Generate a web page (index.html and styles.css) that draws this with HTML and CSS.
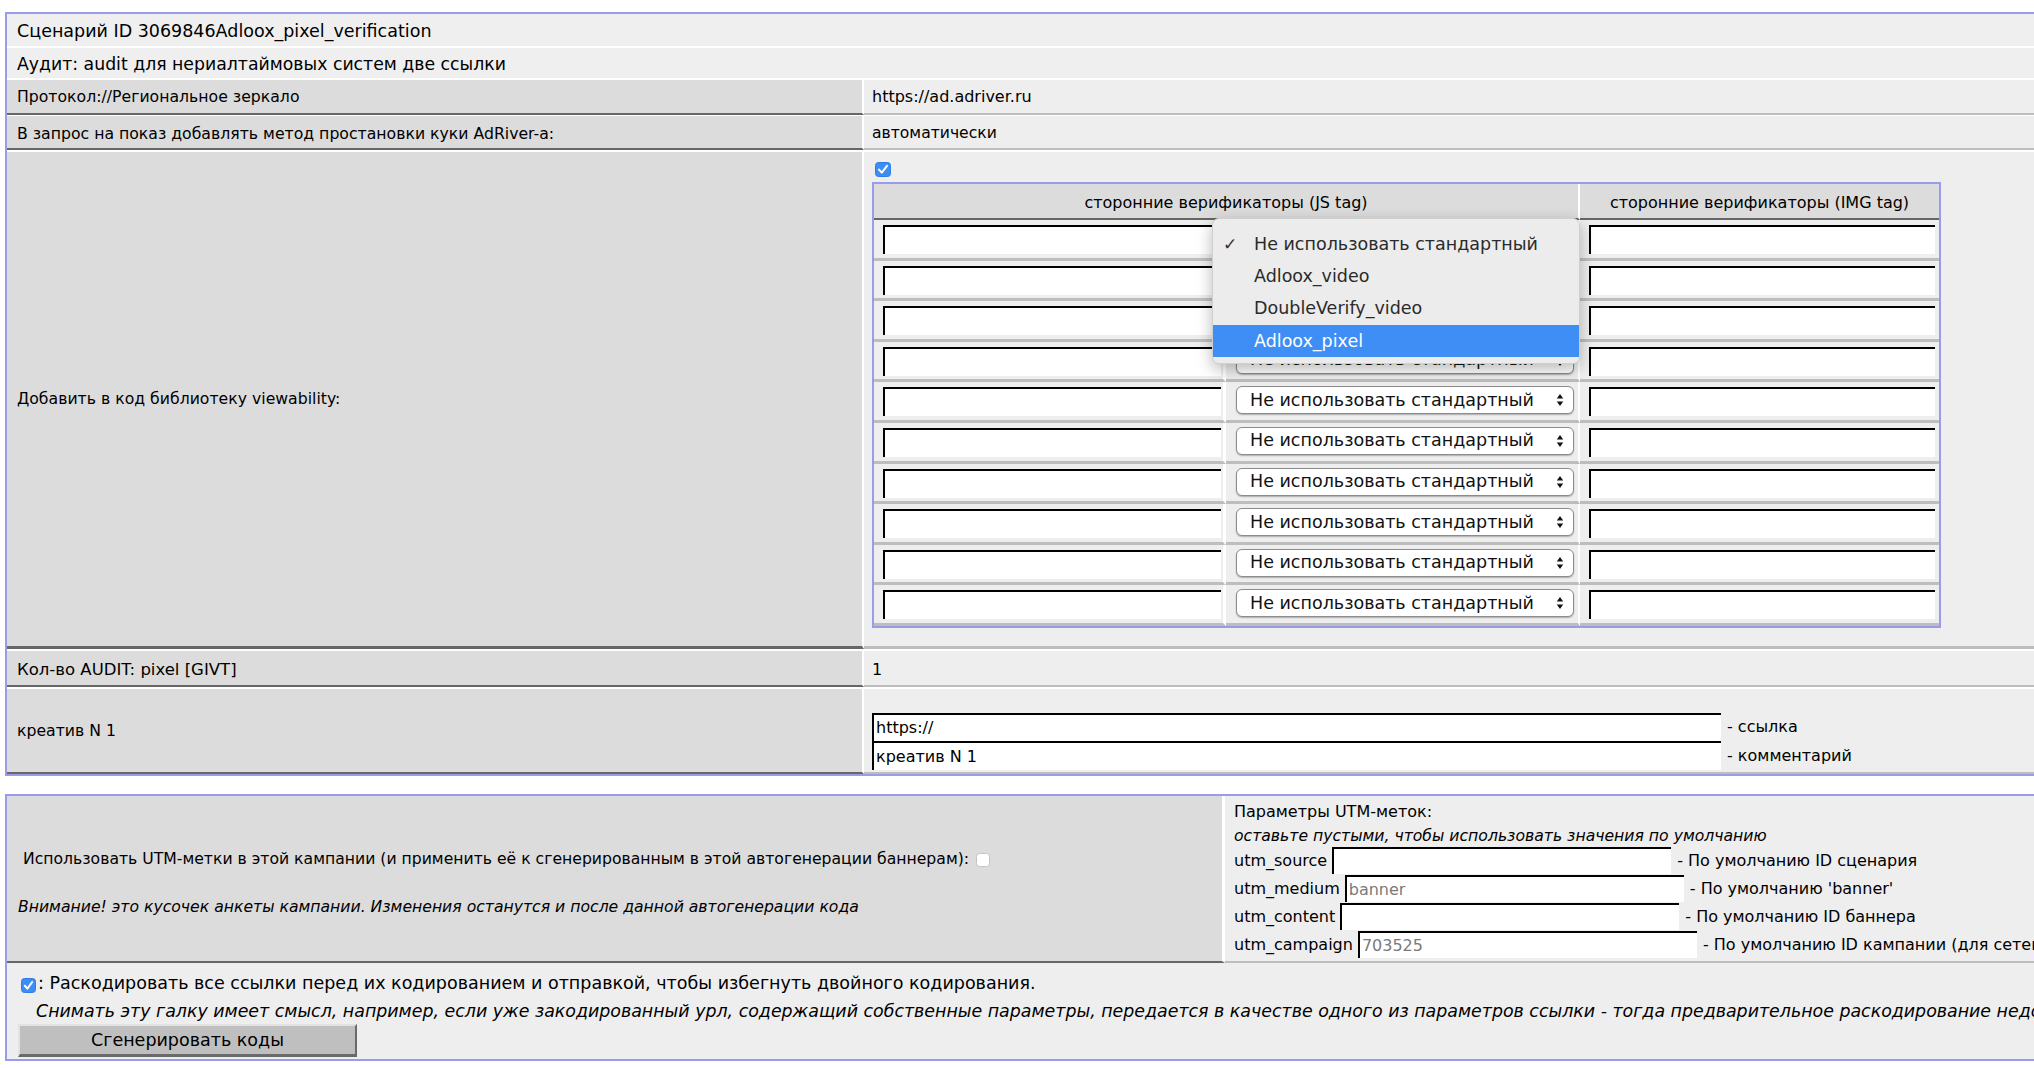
FILE: index.html
```html
<!DOCTYPE html>
<html lang="ru">
<head>
<meta charset="utf-8">
<title>Сценарий ID 3069846Adloox_pixel_verification</title>
<link rel="stylesheet" href="styles.css">
</head>
<body>
<table class="main">
  <colgroup><col class="mc1"><col></colgroup>
  <tr><td class="head h1" colspan="2">Сценарий ID 3069846Adloox_pixel_verification</td></tr>
  <tr><td class="head h2" colspan="2">Аудит: audit для нериалтаймовых систем две ссылки</td></tr>
  <tr class="r3"><td class="l">Протокол://Региональное зеркало</td><td class="r">https://ad.adriver.ru</td></tr>
  <tr class="r4"><td class="l">В запрос на показ добавлять метод простановки куки AdRiver-a:</td><td class="r ru">автоматически</td></tr>
  <tr class="r5"><td class="l">Добавить в код библиотеку viewability:</td>
    <td class="r vcell">
      <div class="cbrow"><span class="cb on"><svg width="16" height="15" viewBox="0 0 16 15"><rect x="0.5" y="0.5" width="15" height="14" rx="3" fill="#3c8ef5" stroke="#2f7de0"/><path d="M4 7.6 L6.8 10.6 L12 3.8" fill="none" stroke="#fff" stroke-width="2" stroke-linecap="round" stroke-linejoin="round"/></svg></span></div>
      <table class="ver">
        <colgroup><col class="vc1"><col class="vc2"><col class="vc3"></colgroup>
        <tr><th class="th1" colspan="2">сторонние верификаторы (JS tag)</th><th>сторонние верификаторы (IMG tag)</th></tr>
        <tr>
          <td class="c1"><input class="txt vin" type="text"></td>
          <td class="c2 popholder"><span class="sel"><span class="seltxt">Не использовать стандартный</span><svg class="arr" width="8" height="14" viewBox="0 0 8 14"><path d="M4 1 L7.2 5.6 H0.8Z M4 13 L7.2 8.4 H0.8Z" fill="#111"/></svg></span>
            <div class="popup">
              <div class="opt"><span class="mk">✓</span>Не использовать стандартный</div>
              <div class="opt"><span class="mk"></span>Adloox_video</div>
              <div class="opt"><span class="mk"></span>DoubleVerify_video</div>
              <div class="opt hl"><span class="mk"></span>Adloox_pixel</div>
            </div>
          </td>
          <td class="c3"><input class="txt vin3" type="text"></td>
        </tr>
        <tr><td class="c1"><input class="txt vin" type="text"></td><td class="c2"><span class="sel"><span class="seltxt">Не использовать стандартный</span><svg class="arr" width="8" height="14" viewBox="0 0 8 14"><path d="M4 1 L7.2 5.6 H0.8Z M4 13 L7.2 8.4 H0.8Z" fill="#111"/></svg></span></td><td class="c3"><input class="txt vin3" type="text"></td></tr>
        <tr><td class="c1"><input class="txt vin" type="text"></td><td class="c2"><span class="sel"><span class="seltxt">Не использовать стандартный</span><svg class="arr" width="8" height="14" viewBox="0 0 8 14"><path d="M4 1 L7.2 5.6 H0.8Z M4 13 L7.2 8.4 H0.8Z" fill="#111"/></svg></span></td><td class="c3"><input class="txt vin3" type="text"></td></tr>
        <tr><td class="c1"><input class="txt vin" type="text"></td><td class="c2"><span class="sel"><span class="seltxt">Не использовать стандартный</span><svg class="arr" width="8" height="14" viewBox="0 0 8 14"><path d="M4 1 L7.2 5.6 H0.8Z M4 13 L7.2 8.4 H0.8Z" fill="#111"/></svg></span></td><td class="c3"><input class="txt vin3" type="text"></td></tr>
        <tr><td class="c1"><input class="txt vin" type="text"></td><td class="c2"><span class="sel"><span class="seltxt">Не использовать стандартный</span><svg class="arr" width="8" height="14" viewBox="0 0 8 14"><path d="M4 1 L7.2 5.6 H0.8Z M4 13 L7.2 8.4 H0.8Z" fill="#111"/></svg></span></td><td class="c3"><input class="txt vin3" type="text"></td></tr>
        <tr><td class="c1"><input class="txt vin" type="text"></td><td class="c2"><span class="sel"><span class="seltxt">Не использовать стандартный</span><svg class="arr" width="8" height="14" viewBox="0 0 8 14"><path d="M4 1 L7.2 5.6 H0.8Z M4 13 L7.2 8.4 H0.8Z" fill="#111"/></svg></span></td><td class="c3"><input class="txt vin3" type="text"></td></tr>
        <tr><td class="c1"><input class="txt vin" type="text"></td><td class="c2"><span class="sel"><span class="seltxt">Не использовать стандартный</span><svg class="arr" width="8" height="14" viewBox="0 0 8 14"><path d="M4 1 L7.2 5.6 H0.8Z M4 13 L7.2 8.4 H0.8Z" fill="#111"/></svg></span></td><td class="c3"><input class="txt vin3" type="text"></td></tr>
        <tr><td class="c1"><input class="txt vin" type="text"></td><td class="c2"><span class="sel"><span class="seltxt">Не использовать стандартный</span><svg class="arr" width="8" height="14" viewBox="0 0 8 14"><path d="M4 1 L7.2 5.6 H0.8Z M4 13 L7.2 8.4 H0.8Z" fill="#111"/></svg></span></td><td class="c3"><input class="txt vin3" type="text"></td></tr>
        <tr><td class="c1"><input class="txt vin" type="text"></td><td class="c2"><span class="sel"><span class="seltxt">Не использовать стандартный</span><svg class="arr" width="8" height="14" viewBox="0 0 8 14"><path d="M4 1 L7.2 5.6 H0.8Z M4 13 L7.2 8.4 H0.8Z" fill="#111"/></svg></span></td><td class="c3"><input class="txt vin3" type="text"></td></tr>
        <tr><td class="c1"><input class="txt vin" type="text"></td><td class="c2"><span class="sel"><span class="seltxt">Не использовать стандартный</span><svg class="arr" width="8" height="14" viewBox="0 0 8 14"><path d="M4 1 L7.2 5.6 H0.8Z M4 13 L7.2 8.4 H0.8Z" fill="#111"/></svg></span></td><td class="c3"><input class="txt vin3" type="text"></td></tr>
      </table>
    </td></tr>
  <tr class="r6"><td class="l lat">Кол-во AUDIT: pixel [GIVT]</td><td class="r">1</td></tr>
  <tr class="r7"><td class="l crlabel">креатив N 1</td>
    <td class="r crcell">
      <div class="crow"><input class="txt wide" type="text" value="https://"><span>- ссылка</span></div>
      <div class="crow c2row"><input class="txt wide" type="text" value="креатив N 1"><span>- комментарий</span></div>
    </td></tr>
</table>

<table class="utmt">
  <colgroup><col class="uc1"><col></colgroup>
  <tr>
    <td class="ul">
      <div class="uline">&nbsp;Использовать UTM-метки в этой кампании (и применить её к сгенерированным в этой автогенерации баннерам): <span class="cb off"><svg width="14" height="14" viewBox="0 0 14 14"><rect x="0.5" y="0.5" width="13" height="13" rx="3" fill="#fff" stroke="#c4c4c4"/></svg></span></div>
      <div class="uline">&nbsp;</div>
      <div class="uline"><i>Внимание! это кусочек анкеты кампании. Изменения останутся и после данной автогенерации кода</i></div>
    </td>
    <td class="ur">
      <div class="p1">Параметры UTM-меток:</div>
      <div class="p2"><i>оставьте пустыми, чтобы использовать значения по умолчанию</i></div>
      <div class="utm"><span>utm_source</span><input class="txt uin" type="text"><span>- По умолчанию ID сценария</span></div>
      <div class="utm"><span>utm_medium</span><input class="txt uin" type="text" placeholder="banner"><span>- По умолчанию 'banner'</span></div>
      <div class="utm"><span>utm_content</span><input class="txt uin" type="text"><span>- По умолчанию ID баннера</span></div>
      <div class="utm"><span>utm_campaign</span><input class="txt uin" type="text" placeholder="703525"><span>- По умолчанию ID кампании (для сетевых кампаний - ID сети)</span></div>
    </td>
  </tr>
  <tr>
    <td class="bottom" colspan="2">
      <div class="bline first"><span class="cb on sm"><svg width="15" height="15" viewBox="0 0 15 15"><rect x="0.5" y="0.5" width="14" height="14" rx="3" fill="#3c8ef5" stroke="#2f7de0"/><path d="M3.8 7.8 L6.4 10.6 L11.2 4" fill="none" stroke="#fff" stroke-width="2" stroke-linecap="round" stroke-linejoin="round"/></svg></span>: Раскодировать все ссылки перед их кодированием и отправкой, чтобы избегнуть двойного кодирования.</div>
      <div class="bline note"><i>Снимать эту галку имеет смысл, например, если уже закодированный урл, содержащий собственные параметры, передается в качестве одного из параметров ссылки - тогда предварительное раскодирование недопустимо.</i></div>
      <button class="btn" type="button">Сгенерировать коды</button>
    </td>
  </tr>
</table>
</body>
</html>
```

FILE: styles.css
```css
* { box-sizing: border-box; }
html { overflow: hidden; background: #fff; }
body {
  margin: 0;
  padding: 12px 0 0 5px;
  font-family: "DejaVu Sans", Verdana, sans-serif;
  font-size: 16px;
  line-height: 19px;
  color: #000;
}
table { border-collapse: separate; border-spacing: 0; table-layout: fixed; }
td, th { white-space: nowrap; }

/* ---------- main table ---------- */
.main { width: 2400px; border: 2px solid #9b9bee; }
.mc1 { width: 857px; }
.main > tbody > tr > td { padding: 7px 10px; vertical-align: middle; }
.main > tbody > tr + tr > td { border-top: 2px solid #fff; }
.main > tbody > tr.r4 > td { border-top-width: 1px; padding-top: 8px; padding-bottom: 5px; }

.head { background: #efefef; font-size: 17.5px; line-height: 22px; }
.main > tbody > tr > td.h1 { padding: 6px 10px 4px; }
.main > tbody > tr > td.h2 { padding: 5px 10px 3px; font-size: 17.3px; }

.l { background: #dcdcdc; border-right: 2px solid #fff; border-bottom: 2px solid #666; font-size: 15.7px; }
.l.lat { font-size: 16.5px; }
.r { background: #eeeeee; border-bottom: 2px solid #bdbdbd; }
.r.ru { font-size: 15.6px; }
.main > tbody > tr > td.r { padding-left: 8px; }

.main > tbody > tr.r5 > td.vcell { padding: 8px 8px 18px 8px; border-bottom-width: 3px; font-size: 16px; }
.main > tbody > tr.r5 > td.l { border-bottom-width: 3px; }
.main > tbody > tr.r6 > td { padding-top: 9px; padding-bottom: 6px; }
.main > tbody > tr.r7 > td.crcell { padding: 24px 8px 2px 8px; }
.main > tbody > tr.r7 > td.crlabel { padding: 7px 10px; }

.cbrow { height: 22px; }
.cb { display: inline-block; line-height: 0; }
.cbrow .cb { margin: 2px 0 0 3px; }

/* inputs */
.txt {
  font-family: "DejaVu Sans", Verdana, sans-serif;
  font-size: 16px;
  color: #000;
  background: #fff;
  border-style: solid;
  border-width: 2px 0 0 2px;
  border-color: #000;
  padding: 0 2px;
  margin: 0;
  outline: none;
  display: block;
}
.txt::placeholder { color: #7a7a7a; }

/* ---------- verifiers table ---------- */
.ver { width: 1069px; border: 2px solid #9b9bee; }
.vc1 { width: 352px; }
.vc2 { width: 354px; }
.vc3 { width: 359px; }
.ver th {
  background: #dcdcdc;
  font-weight: normal;
  padding: 9px 0 6px;
  text-align: center;
  border-bottom: 2px solid #666;
}
.ver th.th1 { border-right: 2px solid #fff; }
.ver td {
  background: #eeeeee;
  padding: 5px 0 3.6px 0;
  border-bottom: 3px solid #bdbdbd;
  vertical-align: top;
}
.ver td.c1 { padding-left: 9px; border-right: 3px solid #fff; }
.ver td.c2 { padding-left: 10px; padding-top: 4px; padding-bottom: 4.6px; border-right: 2px solid #fff; }
.ver td.c3 { padding-left: 9px; }
.vin { width: 338px; height: 29px; }
.vin3 { width: 346px; height: 29px; }

.sel {
  display: flex;
  align-items: center;
  justify-content: space-between;
  width: 338px;
  height: 28px;
  background: #fff;
  border: 1px solid #8c8c8c;
  border-radius: 6px;
  box-shadow: 0 1px 1.5px rgba(0, 0, 0, 0.28);
  padding: 0 9px 0 13px;
  font-size: 17.5px;
  color: #111;
}
.arr { flex: none; }

.popholder { position: relative; }
.popup {
  position: absolute;
  left: -14px;
  top: -2px;
  width: 368px;
  height: 146px;
  padding: 9px 0;
  background: #ececec;
  border: 1px solid #cfcfcf;
  border-radius: 7px;
  box-shadow: 0 5px 16px rgba(0, 0, 0, 0.28);
  z-index: 5;
  font-size: 17.5px;
  color: #2a2a2a;
}
.opt { display: flex; align-items: center; height: 32.3px; }
.opt .mk { width: 41px; padding-left: 10px; font-size: 17px; font-weight: bold; color: #333; }
.opt.hl { background: #3e8ef6; color: #fff; }

/* creative rows */
.crow { display: flex; align-items: center; gap: 6px; }
.wide { width: 849px; height: 28px; }
.c2row .wide { height: 29px; }

/* ---------- UTM table ---------- */
.utmt { width: 2400px; border: 2px solid #9b9bee; margin-top: 18px; line-height: 24px; }
.uc1 { width: 1218px; }
.ul {
  background: #dcdcdc;
  border-right: 3px solid #fff;
  border-bottom: 2px solid #666;
  vertical-align: middle;
  padding: 10px 11px 0;
  font-size: 15.65px;
}
.uline { height: 24px; }
.cb.off { vertical-align: -3px; margin-left: 2px; }
.ur {
  background: #eeeeee;
  border-bottom: 2px solid #bdbdbd;
  vertical-align: top;
  padding: 4px 9px 2px;
}
.p1 { height: 24px; }
.p2 { height: 23px; font-size: 15.65px; }
.utm { display: flex; align-items: center; height: 28px; }
.uin { width: 339px; height: 27px; margin: 0 6px 0 5px; }

.bottom {
  background: #eeeeee;
  padding: 8px 11px 2px;
  vertical-align: top;
  font-size: 17.5px;
}
.bline { height: 26px; line-height: 24px; }
.bline.first { height: 28px; }
.cb.sm { vertical-align: -4px; margin: 0 2px 0 3px; }
.note { padding-left: 18px; height: 25px; font-size: 17.4px; }
.btn {
  display: block;
  width: 339px;
  height: 33px;
  background: #bfbfbf;
  border-style: solid;
  border-width: 2px 2px 3px 2px;
  border-color: #e2e2e2 #6a6a6a #6a6a6a #e2e2e2;
  font-family: "DejaVu Sans", Verdana, sans-serif;
  font-size: 17.5px;
  color: #000;
  padding: 0;
}
```
